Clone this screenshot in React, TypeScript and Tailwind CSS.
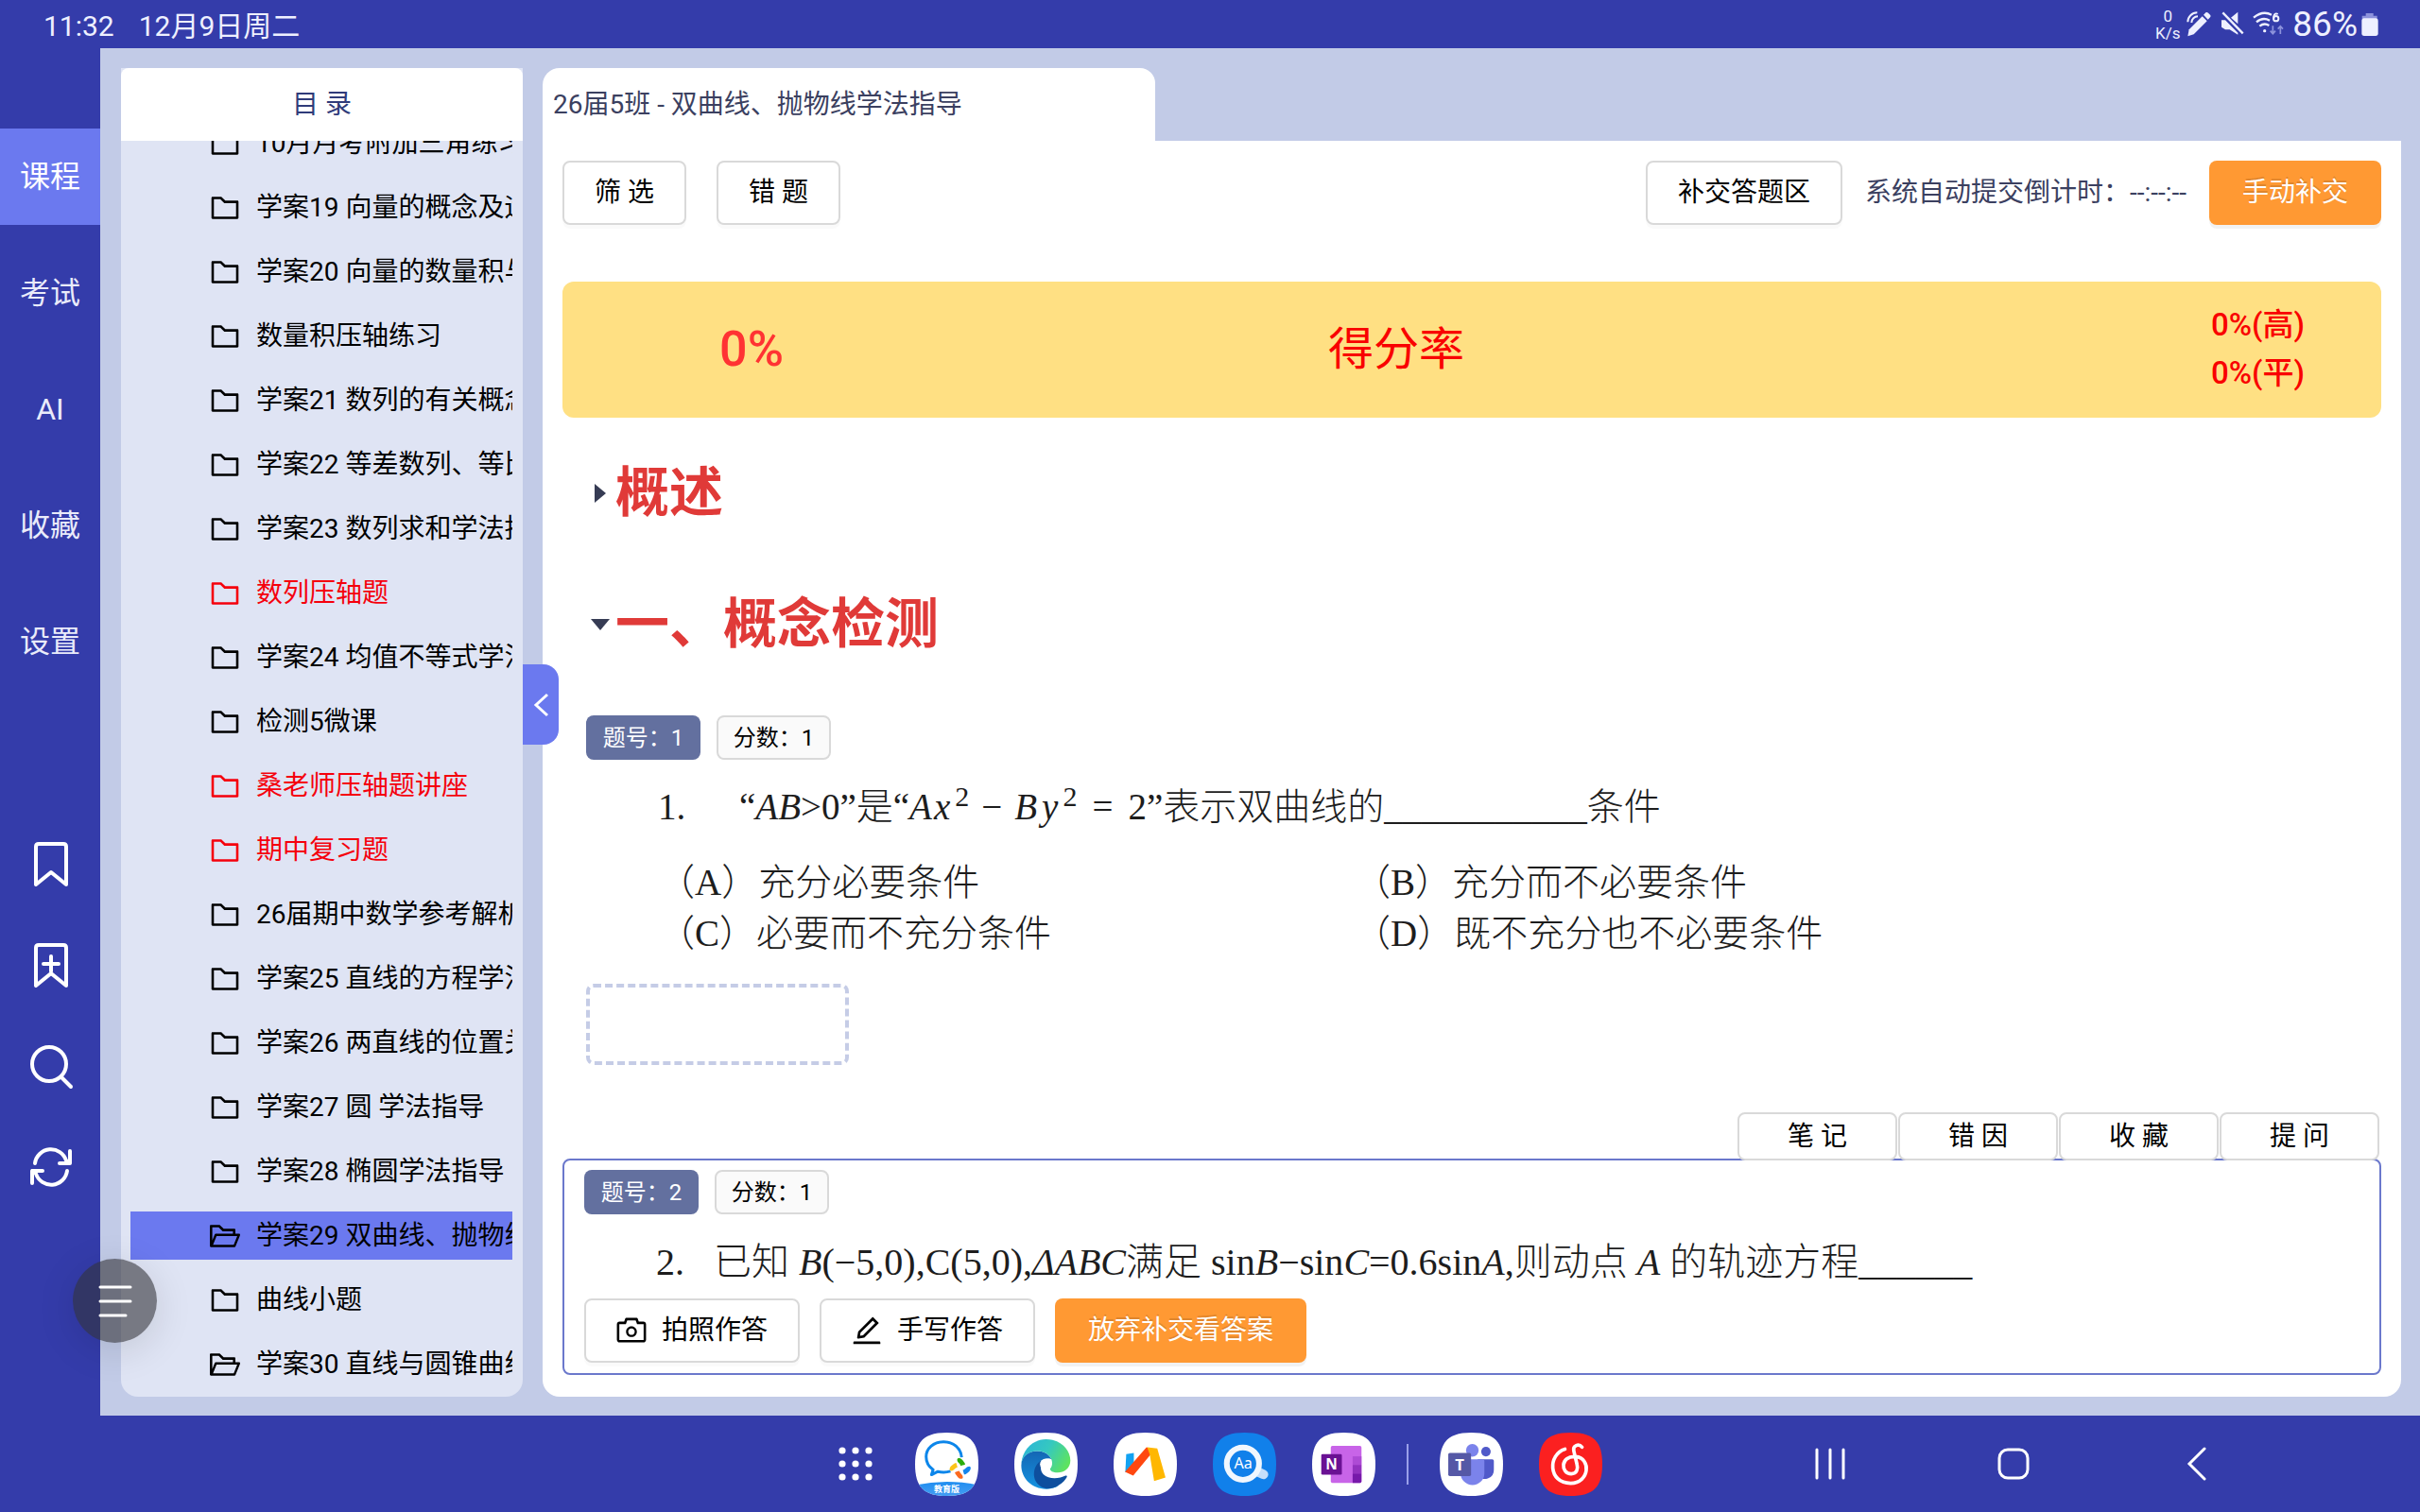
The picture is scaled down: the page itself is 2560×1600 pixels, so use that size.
import type { ReactNode } from "react";
import {
  AiOutlineCamera,
  AiOutlineEdit,
  AiOutlineFolder,
  AiOutlineFolderOpen,
} from "react-icons/ai";

const ANT_BOX = "64 64 896 896";
const SQUIRCLE =
  "M100 0C172 0 200 28 200 100S172 200 100 200 0 172 0 100 28 0 100 0Z";

type Lesson = { title: string; red?: boolean; open?: boolean; active?: boolean };

const lessons: Lesson[] = [
  { title: "10月月考附加三角练习" },
  { title: "学案19 向量的概念及运算" },
  { title: "学案20 向量的数量积与应用" },
  { title: "数量积压轴练习" },
  { title: "学案21 数列的有关概念" },
  { title: "学案22 等差数列、等比数列" },
  { title: "学案23 数列求和学法指导" },
  { title: "数列压轴题", red: true },
  { title: "学案24 均值不等式学法指导" },
  { title: "检测5微课" },
  { title: "桑老师压轴题讲座", red: true },
  { title: "期中复习题", red: true },
  { title: "26届期中数学参考解析" },
  { title: "学案25 直线的方程学法指导" },
  { title: "学案26 两直线的位置关系" },
  { title: "学案27 圆 学法指导" },
  { title: "学案28 椭圆学法指导" },
  { title: "学案29 双曲线、抛物线学法指导", open: true, active: true },
  { title: "曲线小题" },
  { title: "学案30 直线与圆锥曲线", open: true },
];

const sections = ["课程", "考试", "AI", "收藏", "设置"];

function StatusBar() {
  return (
    <header className="flex h-[51px] items-center justify-between pl-[46px] pr-[44px] text-[30px] text-[#eef0ff]">
      <div className="flex gap-[26px] pt-1">
        <span>11:32</span>
        <span>12月9日周二</span>
      </div>
      <div className="flex items-center">
        <div className="flex w-7 flex-col items-center text-[17px] leading-[18px]">
          <span>0</span>
          <span>K/s</span>
        </div>
        <svg className="ml-[6px] h-[27px] w-[27px]" viewBox="0 0 81 81" fill="none" aria-label="手写笔">
          <path d="M8 58 50 16l15 15-42 42-19 6z" fill="#eef0ff" />
          <path d="m54 11 7-7q4-3 8 1l6 6q4 4 0 8l-7 7z" fill="#eef0ff" />
          <path d="M4 34A30 30 0 0 1 34 4M16 36A20 20 0 0 1 36 16" stroke="#eef0ff" strokeWidth="6" />
        </svg>
        <svg className="ml-2 h-[27px] w-[27px]" viewBox="0 0 81 81" fill="none" aria-label="静音">
          <path d="M6 28h12l14 14 26 26v6L32 58H18L6 50zM58 2v38L36 20z" fill="#eef0ff" />
          <path d="m10 4 64 66" stroke="#eef0ff" strokeWidth="7" />
        </svg>
        <svg className="ml-2 h-[28px] w-[34px]" viewBox="0 0 102 84" fill="none" aria-label="无线网络">
          <path
            d="M3 20Q32-4 60 11M12 34q20-17 42-5M22 47q15-12 30-2"
            stroke="#eef0ff"
            strokeWidth="7"
          />
          <circle cx="38" cy="62" r="5" fill="#eef0ff" />
          <path d="M80 9q-9-5-13 6v8" stroke="#eef0ff" strokeWidth="6" />
          <circle cx="74" cy="23" r="8" stroke="#eef0ff" strokeWidth="6" />
          <path d="M64 46v24m-8-8 8 9 8-9M88 72V48m-8 8 8-9 8 9" stroke="#8d93dc" strokeWidth="5" />
        </svg>
        <span className="ml-2 text-[37px] leading-none">86%</span>
        <svg className="ml-1 h-[24px] w-[18px]" viewBox="0 0 54 72" aria-label="电池">
          <path d="M14 0h24v8h12v10H2V8h12z" fill="#8d93dc" />
          <rect x="1" y="16" width="52" height="56" rx="8" fill="#eef0ff" />
        </svg>
      </div>
    </header>
  );
}

function ToolIcon({ label, children }: { label: string; children: ReactNode }) {
  return (
    <button type="button" aria-label={label} className="text-white">
      <svg
        className="h-[48px] w-[48px]"
        viewBox="0 0 48 48"
        fill="none"
        stroke="currentColor"
        strokeWidth="4"
        strokeLinecap="round"
        strokeLinejoin="round"
      >
        {children}
      </svg>
    </button>
  );
}

function SideNav() {
  return (
    <nav className="flex w-[106px] shrink-0 flex-col items-center pt-[85px]">
      <div className="flex w-full flex-col gap-[21px]">
        {sections.map((s) => (
          <button
            key={s}
            type="button"
            className={
              s === "课程"
                ? "h-[102px] w-full bg-[#6b79ef] text-[32px] text-white"
                : "h-[102px] w-full text-[32px] text-[#e9ebfa]"
            }
          >
            {s}
          </button>
        ))}
      </div>
      <div className="mt-[161px] flex flex-col gap-[59px] pl-[2px]">
        <ToolIcon label="书签">
          <path d="M8 45V5q0-3 3-3h26q3 0 3 3v40L24 32z" />
        </ToolIcon>
        <ToolIcon label="添加书签">
          <path d="M8 45V5q0-3 3-3h26q3 0 3 3v40L24 32zM24 14v16M16 22h16" />
        </ToolIcon>
        <ToolIcon label="搜索">
          <circle cx="22" cy="21" r="18" />
          <path d="m35 35 10 10" />
        </ToolIcon>
        <ToolIcon label="刷新">
          <path d="M7 19A17 17 0 0 1 40 16l4 3M44 6v13H33M41 27A17 17 0 0 1 8 30l-4-3M4 40V27h11" />
        </ToolIcon>
      </div>
    </nav>
  );
}

function Catalog() {
  return (
    <aside className="relative flex w-[425px] shrink-0 flex-col rounded-b-[18px] bg-[#dfe4f4]">
      <h2 className="flex h-[77px] items-center justify-center rounded-t-lg bg-white text-[28px] text-[#2f3b7a]">
        目 录
      </h2>
      <div className="flex-1 overflow-hidden rounded-b-[18px] px-[10px] pb-[9px]">
        <ul className="-mt-[23px] mr-px flex flex-col gap-[17px]">
          {lessons.map((l) => (
            <li key={l.title}>
              <a
                href="#lesson"
                className={
                  "flex h-[51px] items-center gap-[17px] overflow-hidden whitespace-nowrap pl-[84px] text-[28px] " +
                  (l.red ? "text-[#f5000c]" : "text-black") +
                  (l.active ? " bg-[#6b79ef]" : "")
                }
              >
                {l.open ? (
                  <AiOutlineFolderOpen viewBox={ANT_BOX} className="h-8 w-8 shrink-0" />
                ) : (
                  <AiOutlineFolder viewBox={ANT_BOX} className="h-8 w-8 shrink-0" />
                )}
                <span>{l.title}</span>
              </a>
            </li>
          ))}
        </ul>
      </div>
      <button
        type="button"
        aria-label="收起目录"
        className="absolute left-full top-[631px] z-10 flex h-[85px] w-[38px] items-center justify-center rounded-r-[16px] bg-[#6b79ef]"
      >
        <svg className="h-[26px] w-[17px]" viewBox="0 0 17 26" fill="none" stroke="white" strokeWidth="3">
          <path d="M15 2 3 13l12 11" />
        </svg>
      </button>
    </aside>
  );
}

function PlainButton({ children }: { children: ReactNode }) {
  return (
    <button
      type="button"
      className="flex h-[68px] items-center gap-4 rounded-lg border-2 border-[#d9d9d9] bg-white px-8 text-[28px] text-black shadow-[0_4px_0_rgba(0,0,0,0.02)]"
    >
      {children}
    </button>
  );
}

function OrangeButton({ children }: { children: ReactNode }) {
  return (
    <button
      type="button"
      className="h-[68px] rounded-lg bg-[#ff9933] px-[35px] text-[28px] text-white shadow-[0_4px_0_rgba(0,0,0,0.05)] [text-shadow:0_-2px_0_rgba(0,0,0,0.12)]"
    >
      {children}
    </button>
  );
}

function Tags({ no, score }: { no: number; score: number }) {
  return (
    <div className="flex gap-[17px] text-[24px]">
      <span className="flex h-[47px] w-[121px] items-center justify-center rounded-lg bg-[#63709f] text-white">
        题号：{no}
      </span>
      <span className="flex h-[47px] w-[121px] items-center justify-center rounded-lg border-2 border-[#d9d9d9] bg-[#fafafa] text-black">
        分数：{score}
      </span>
    </div>
  );
}

function Sup({ children }: { children: ReactNode }) {
  return <sup className="top-[-14px] ml-[5px] text-[30px] not-italic">{children}</sup>;
}

function Heading({ open, children }: { open?: boolean; children: ReactNode }) {
  return (
    <button type="button" aria-expanded={!!open} className="flex items-center">
      <span className="flex w-[33px] justify-center">
        {open ? (
          <svg className="h-[14px] w-[22px]" viewBox="0 0 22 14" fill="#363c54">
            <path d="M1 1h20L11 13z" />
          </svg>
        ) : (
          <svg className="h-[22px] w-[14px]" viewBox="0 0 14 22" fill="#363c54">
            <path d="M1 1v20l12-10z" />
          </svg>
        )}
      </span>
      <span className="text-[57px] font-bold leading-[68px] text-[#e03a38]">{children}</span>
    </button>
  );
}

function QuestionOne() {
  return (
    <section className="pl-[25px]">
      <Tags no={1} score={1} />
      <div className="pl-[76px] pt-[22px] font-['Liberation_Serif','Noto_Sans_CJK_SC',serif] text-[39px] font-light text-[#1d1d1d]">
        <p className="flex h-[56px] items-center whitespace-pre leading-[56px]">
          <span className="w-[86px]">1.</span>
          <span>
            “<i>AB</i>&gt;0”是“<i>A</i>
            <i className="ml-[2px]">x</i>
            <Sup>2</Sup>
            <span className="mx-[13px]">−</span>
            <i>B</i>
            <i className="ml-[5px]">y</i>
            <Sup>2</Sup>
            <span className="mx-[16px]">=</span>2”表示双曲线的___________条件
          </span>
        </p>
        <ul className="grid grid-cols-[736px_1fr] pt-[25px] leading-[54px]">
          <li>（A）充分必要条件</li>
          <li>（B）充分而不必要条件</li>
          <li>（C）必要而不充分条件</li>
          <li>（D）既不充分也不必要条件</li>
        </ul>
      </div>
      <input
        aria-label="第1题答案"
        className="mt-[26px] block h-[86px] w-[278px] rounded-lg border-4 border-dashed border-[#c5cce6] bg-white px-4 text-[28px]"
      />
    </section>
  );
}

function QuestionTwo() {
  return (
    <section className="mt-[50px]">
      <div className="relative z-10 -mb-[2px] flex justify-end gap-px pr-[2px]">
        {["笔 记", "错 因", "收 藏", "提 问"].map((t) => (
          <button
            key={t}
            type="button"
            className="h-[51px] w-[169px] rounded-lg border-2 border-[#d9d9d9] bg-white text-[28px] leading-none text-black"
          >
            {t}
          </button>
        ))}
      </div>
      <div className="rounded-lg border-2 border-[#6b78cc] px-[21px] pb-[11px] pt-[10px]">
        <Tags no={2} score={1} />
        <p className="flex items-center whitespace-pre pb-[14px] pl-[76px] pt-[27px] font-['Liberation_Serif','Noto_Sans_CJK_SC',serif] text-[40px] font-light leading-[48px] text-[#1d1d1d]">
          <span className="w-[61px]">2.</span>
          <span>
            已知 <i>B</i>(−5,0),C(5,0),<i>ΔABC</i>满足 sin<i>B</i>−sin<i>C</i>=0.6sin<i>A</i>,则动点{" "}
            <i>A</i> 的轨迹方程______
          </span>
        </p>
        <div className="flex gap-[21px]">
          <PlainButton>
            <AiOutlineCamera viewBox={ANT_BOX} className="h-8 w-8" />
            拍照作答
          </PlainButton>
          <PlainButton>
            <AiOutlineEdit viewBox={ANT_BOX} className="h-8 w-8" />
            手写作答
          </PlainButton>
          <OrangeButton>放弃补交看答案</OrangeButton>
        </div>
      </div>
    </section>
  );
}

function Workspace() {
  return (
    <main className="flex min-w-0 flex-1 flex-col">
      <h1 className="flex h-[77px] w-[648px] items-center rounded-tl-[18px] rounded-tr-[16px] bg-white pl-[11px] text-[28px] text-[#3b4060]">
        26届5班 - 双曲线、抛物线学法指导
      </h1>
      <div className="flex-1 rounded-b-[18px] bg-white px-[21px] pb-[23px] pt-[21px]">
        <div className="flex items-center justify-between">
          <div className="flex gap-8">
            <PlainButton>筛 选</PlainButton>
            <PlainButton>错 题</PlainButton>
          </div>
          <div className="flex items-center gap-[24px] text-[28px] text-[#3b4060]">
            <PlainButton>补交答题区</PlainButton>
            <span>系统自动提交倒计时：--:--:--</span>
            <OrangeButton>手动补交</OrangeButton>
          </div>
        </div>
        <div className="mt-[60px] grid h-[144px] grid-cols-[400px_1fr_400px] items-center rounded-xl bg-[#ffe083] text-[#f90000]">
          <span className="text-center text-[52px] font-medium text-[#ff3333]">0%</span>
          <span className="pr-[160px] text-center text-[48px]">得分率</span>
          <div className="flex flex-col items-end pb-[3px] pr-[81px] text-[33px] font-medium leading-[51px]">
            <span>0%(高)</span>
            <span>0%(平)</span>
          </div>
        </div>
        <div className="flex flex-col items-start gap-[71px] pb-[62px] pl-[23px] pt-[46px]">
          <Heading>概述</Heading>
          <Heading open>一、概念检测</Heading>
        </div>
        <QuestionOne />
        <QuestionTwo />
      </div>
    </main>
  );
}

function AppIcon({ label, fill, children }: { label: string; fill: string; children: ReactNode }) {
  return (
    <button type="button" aria-label={label}>
      <svg className="h-[67px] w-[67px]" viewBox="0 0 200 200" fill="none">
        <path d={SQUIRCLE} fill={fill} />
        {children}
      </svg>
    </button>
  );
}

function Dock() {
  return (
    <footer className="flex h-[102px] items-center justify-end pr-[225px]">
      <div className="mr-[224px] flex items-center">
        <button type="button" aria-label="所有应用" className="mr-[45px]">
          <svg className="h-[36px] w-[36px]" viewBox="0 0 36 36" fill="white">
            {[4, 18, 32].map((y) =>
              [4, 18, 32].map((x) => <circle key={x + "-" + y} cx={x} cy={y} r="3.6" />),
            )}
          </svg>
        </button>
        <div className="flex gap-[38px]">
          <AppIcon label="企业微信教育版" fill="#fff">
            <defs>
              <clipPath id="wecom">
                <path d={SQUIRCLE} />
              </clipPath>
              <linearGradient id="wecomBand" x1="0" x2="0" y1="0" y2="1">
                <stop stopColor="#1f8df0" />
                <stop offset="1" stopColor="#4aa0f3" />
              </linearGradient>
            </defs>
            <path
              d="M147 78C145 48 120 29 90 29 58 29 35 50 35 76c0 18 9 32 22 41l-5 16 20-10q20 5 40-1"
              stroke="#0c86ea"
              strokeWidth="9"
              strokeLinejoin="round"
            />
            <path d="M133 86c0-8 12-6 18 2 4 6 8 10 7 13-6 2-9 3-14 4-1-8-11-10-11-19z" fill="#2bad0c" />
            <path d="M171 107c8 0 5 14-3 18-6 4-10 8-13 7-2-6-3-9-4-14 8-1 11-11 20-11z" fill="#1485ec" />
            <path d="M151 141c0 8-14 5-18-3-4-6-8-10-7-13 6-2 9-3 14-4 1 8 11 11 11 20z" fill="#fb6a1e" />
            <path d="M114 121c-8 0-5-14 3-18 6-4 10-8 13-7 2 6 3 9 4 14-8 1-11 11-20 11z" fill="#fcc419" />
            <path d="M0 166q100-22 200 0v40H0z" fill="url(#wecomBand)" clipPath="url(#wecom)" />
            <text
              x="100"
              y="189"
              textAnchor="middle"
              fontSize="27"
              fontWeight="700"
              fill="#fff"
              fontFamily="'Noto Sans CJK SC',sans-serif"
            >
              教育版
            </text>
          </AppIcon>
          <AppIcon label="Edge" fill="#fff">
            <defs>
              <linearGradient id="edgeTop" x1="0" x2="1" y1="0.2" y2="0.6">
                <stop stopColor="#2bb5d8" />
                <stop offset="0.5" stopColor="#35c8c0" />
                <stop offset="1" stopColor="#5ee35f" />
              </linearGradient>
              <linearGradient id="edgeLeft" x1="0" x2="0" y1="0" y2="1">
                <stop stopColor="#1466b4" />
                <stop offset="1" stopColor="#1593e0" />
              </linearGradient>
            </defs>
            <path
              d="M22 104C22 74 45 58 72 58c26 0 40 14 46 26-22-10-38 12-38 36 0 30 28 52 60 48-12 7-26 10-40 10-45 0-78-34-78-74z"
              fill="url(#edgeLeft)"
            />
            <path
              d="M62 132c0-25 14-43 34-48-16 12-16 34-4 48 16 16 50 14 70 4q6-2 4 4c-10 18-32 36-64 37-24-4-40-24-40-45z"
              fill="#0e4f9e"
            />
            <path
              d="M22 98C26 52 60 21 100 21c45 0 77 32 77 67 0 25-20 38-40 38-19 0-26-8-23-13 14-18 2-55-42-55-27 0-46 17-50 40z"
              fill="url(#edgeTop)"
            />
            <circle cx="99" cy="100" r="18" fill="#fff" />
          </AppIcon>
          <AppIcon label="笔记应用" fill="#fff">
            <path d="M40 68l24-4v38l-27 23z" fill="#12a2f2" />
            <path d="m36 124 68-78 16 6-4 18-54 66z" fill="#ff4710" />
            <path d="m106 46 32 4 26 92-36 11-14-85z" fill="#ffb700" />
          </AppIcon>
          <AppIcon label="词典" fill="#1180ea">
            <path d="m138 122 22 10" stroke="#c4defa" strokeWidth="30" strokeLinecap="round" />
            <circle cx="95" cy="98" r="51" fill="#1180ea" stroke="#f1f7fe" strokeWidth="18" />
            <text
              x="96"
              y="114"
              textAnchor="middle"
              fontSize="48"
              fill="#fff"
              fontFamily="'Noto Sans',sans-serif"
            >
              Aa
            </text>
          </AppIcon>
          <AppIcon label="OneNote" fill="#fff">
            <rect x="59" y="42" width="97" height="117" rx="5" fill="#c864e8" />
            <path d="M128 75h28v27h-28z" fill="#ae4bd5" />
            <path d="M128 102h28v27h-28z" fill="#9332bf" />
            <path d="M128 129h28v25q0 5-5 5h-23z" fill="#7719aa" />
            <rect x="29" y="68" width="65" height="65" rx="4" fill="#6a1193" />
            <text
              x="61"
              y="117"
              textAnchor="middle"
              fontSize="46"
              fontWeight="700"
              fill="#fff"
              fontFamily="'Open Sans',sans-serif"
            >
              N
            </text>
          </AppIcon>
        </div>
        <span className="mx-[33px] h-[43px] w-[2px] bg-[#9aa0ea]" />
        <div className="flex gap-[38px]">
          <AppIcon label="Teams" fill="#fff">
            <circle cx="146" cy="60" r="15" fill="#5059c9" />
            <path d="M120 84h46q5 0 5 5v28a28 28 0 0 1-51 17z" fill="#5059c9" />
            <circle cx="103" cy="56" r="20" fill="#7b83eb" />
            <path d="M66 84h70q5 0 5 5v39a37 37 0 0 1-75 0z" fill="#7b83eb" />
            <rect x="27" y="64" width="72" height="73" rx="5" fill="#5558a6" />
            <text
              x="63"
              y="118"
              textAnchor="middle"
              fontSize="50"
              fontWeight="700"
              fill="#fff"
              fontFamily="'Open Sans',sans-serif"
            >
              T
            </text>
          </AppIcon>
          <AppIcon label="网易云音乐" fill="#fb2020">
            <path
              d="M82 52C28 68 28 160 100 160c60 0 66-80 16-84-50-4-48 54-14 54 18 0 22-16 18-30l-10-42c-4-18 16-24 26-12"
              stroke="#fff"
              strokeWidth="11"
              strokeLinecap="round"
            />
          </AppIcon>
        </div>
      </div>
      <div className="flex items-center gap-[160px]">
        <button type="button" aria-label="最近任务">
          <svg className="h-[34px] w-[34px]" viewBox="0 0 34 34" stroke="white" strokeWidth="3" strokeLinecap="round">
            <path d="M3 2v30M17 2v30M31 2v30" />
          </svg>
        </button>
        <button type="button" aria-label="主屏幕">
          <svg className="h-[34px] w-[34px]" viewBox="0 0 34 34" fill="none" stroke="white" strokeWidth="3">
            <rect x="2" y="2" width="30" height="30" rx="9" />
          </svg>
        </button>
        <button type="button" aria-label="返回">
          <svg
            className="h-[36px] w-[28px]"
            viewBox="-6 0 28 36"
            fill="none"
            stroke="white"
            strokeWidth="3"
            strokeLinecap="round"
          >
            <path d="M19 2 3 18l16 16" />
          </svg>
        </button>
      </div>
    </footer>
  );
}

export default function App() {
  return (
    <div className="relative flex min-h-screen flex-col bg-[#343caa] font-[Roboto,'Noto_Sans_CJK_SC',sans-serif]">
      <StatusBar />
      <div className="flex flex-1">
        <SideNav />
        <div className="flex min-w-0 flex-1 gap-[21px] bg-[#c2cbe7] px-[20px] pb-[20px] pl-[22px] pt-[21px]">
          <Catalog />
          <Workspace />
        </div>
      </div>
      <Dock />
      <button
        type="button"
        aria-label="菜单"
        className="absolute bottom-[179px] left-[77px] z-20 flex h-[89px] w-[89px] items-center justify-center rounded-full bg-[#323237]/60 shadow-[0_8px_40px_rgba(0,0,0,0.12)]"
      >
        <svg
          className="h-[36px] w-[36px]"
          viewBox="0 0 36 36"
          stroke="white"
          strokeWidth="3"
          strokeLinecap="round"
        >
          <path d="M2 3h32M2 18h32M2 33h27" />
        </svg>
      </button>
    </div>
  );
}
